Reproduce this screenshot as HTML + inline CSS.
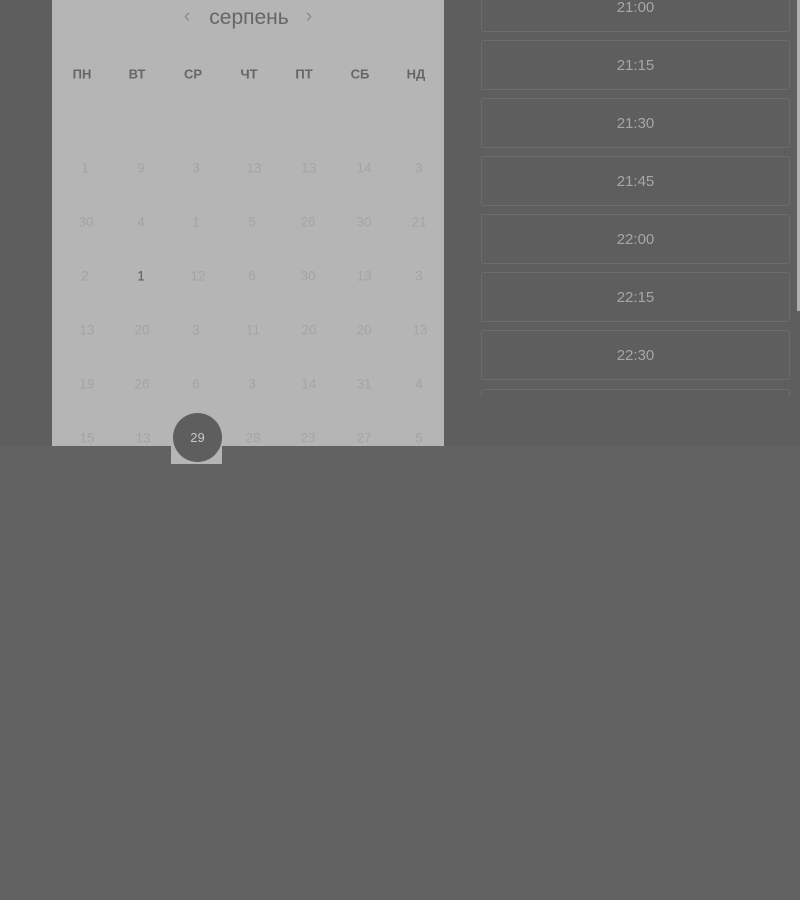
<!DOCTYPE html>
<html><head><meta charset="utf-8"><style>
*{margin:0;padding:0;box-sizing:border-box}
body{width:800px;height:900px;background:#626262;position:relative;overflow:hidden;font-family:"Liberation Sans",sans-serif}
#top{position:absolute;left:0;top:0;width:800px;height:446px;background:#5e5e5e}
#cal{position:absolute;left:52px;top:0;width:392px;height:446px;background:#b5b5b5}
.t{position:absolute;transform:translate(-50%,-50%);white-space:nowrap}
.m{font-size:21px;color:#666;top:18px;left:197px}
.arr{font-size:19px;color:#8c8c8c;top:17px}
.h{font-size:13px;font-weight:bold;color:#666;top:74px}
.d{font-size:13.5px;color:#a4a4a4}
#tab{position:absolute;left:171px;top:446px;width:51px;height:18px;background:#b5b5b5}
.slot{position:absolute;left:481px;width:309px;height:50px;border:1px solid #6c6c6c;border-radius:3px;color:#a6a6a6;font-size:15px;display:flex;align-items:center;justify-content:center}
#clip{position:absolute;left:0;top:0;width:800px;height:396px;overflow:hidden}
#sb{position:absolute;left:797px;top:0;width:3px;height:311px;background:#b0b0b0}
</style></head><body>
<div id="top"></div>
<div id="clip">
<div class="slot" style="top:-18px">21:00</div>
<div class="slot" style="top:40px">21:15</div>
<div class="slot" style="top:98px">21:30</div>
<div class="slot" style="top:156px">21:45</div>
<div class="slot" style="top:214px">22:00</div>
<div class="slot" style="top:272px">22:15</div>
<div class="slot" style="top:330px">22:30</div>
<div class="slot" style="top:389px"></div>
</div>
<div id="sb"></div>
<div id="cal">
<div class="t arr" style="left:135px">‹</div>
<div class="t m">серпень</div>
<div class="t arr" style="left:257px">›</div>
<div class="t h" style="left:30px">ПН</div>
<div class="t h" style="left:85px">ВТ</div>
<div class="t h" style="left:141px">СР</div>
<div class="t h" style="left:197px">ЧТ</div>
<div class="t h" style="left:252px">ПТ</div>
<div class="t h" style="left:308px">СБ</div>
<div class="t h" style="left:364px">НД</div>
</div>
<div id="tab"></div>
<div style="position:absolute;left:0;top:0">
<div class="t d" style="left:85px;top:168px">1</div><div class="t d" style="left:141px;top:168px">9</div><div class="t d" style="left:196px;top:168px">3</div><div class="t d" style="left:254px;top:168px">13</div><div class="t d" style="left:309px;top:168px">13</div><div class="t d" style="left:364px;top:168px">14</div><div class="t d" style="left:419px;top:168px">3</div>
<div class="t d" style="left:86px;top:222px">30</div><div class="t d" style="left:141px;top:222px">4</div><div class="t d" style="left:196px;top:222px">1</div><div class="t d" style="left:252px;top:222px">5</div><div class="t d" style="left:308px;top:222px">26</div><div class="t d" style="left:364px;top:222px">30</div><div class="t d" style="left:419px;top:222px">21</div>
<div class="t d" style="left:85px;top:276px">2</div><div class="t d" style="left:141px;top:276px;color:#5a5a5a">1</div><div class="t d" style="left:198px;top:276px">12</div><div class="t d" style="left:252px;top:276px">6</div><div class="t d" style="left:308px;top:276px">30</div><div class="t d" style="left:364px;top:276px">13</div><div class="t d" style="left:419px;top:276px">3</div>
<div class="t d" style="left:87px;top:330px">13</div><div class="t d" style="left:142px;top:330px">20</div><div class="t d" style="left:196px;top:330px">3</div><div class="t d" style="left:253px;top:330px">11</div><div class="t d" style="left:309px;top:330px">20</div><div class="t d" style="left:364px;top:330px">20</div><div class="t d" style="left:420px;top:330px">13</div>
<div class="t d" style="left:87px;top:384px">19</div><div class="t d" style="left:142px;top:384px">26</div><div class="t d" style="left:196px;top:384px">6</div><div class="t d" style="left:252px;top:384px">3</div><div class="t d" style="left:309px;top:384px">14</div><div class="t d" style="left:364px;top:384px">31</div><div class="t d" style="left:419px;top:384px">4</div>
<div style="position:absolute;left:52px;top:420px;width:392px;height:26px;overflow:hidden"><div style="position:absolute;left:-52px;top:-420px">
<div class="t d" style="left:87px;top:438px">15</div><div class="t d" style="left:143px;top:438px">13</div><div class="t d" style="left:253px;top:438px">28</div><div class="t d" style="left:308px;top:438px">23</div><div class="t d" style="left:364px;top:438px">27</div><div class="t d" style="left:419px;top:438px">5</div>
</div></div>
</div>
<div style="position:absolute;left:173px;top:413px;width:49px;height:49px;border-radius:50%;background:#5e5e5e;color:#c8c8c8;font-size:13px;display:flex;align-items:center;justify-content:center">29</div>
</body></html>
